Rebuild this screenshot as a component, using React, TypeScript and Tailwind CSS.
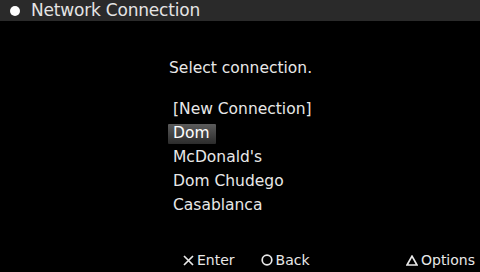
const items = ['Dom', "McDonald's", 'Dom Chudego', 'Casablanca'];

export default function App() {
    return (
        <div
            className="w-[480px] h-[272px] bg-black text-[#e8e8e8] flex flex-col overflow-hidden"
            style={{ fontFamily: '"DejaVu Sans", Verdana, sans-serif' }}
        >
            {/* Title bar */}
            <div className="h-[21px] bg-[#2a2a2a] flex items-center pl-[10px] gap-[11px]">
                <div className="w-[10px] h-[10px] rounded-full bg-white" />
                <span className="text-[17px] leading-none text-[#e4e4e4] tracking-[-0.2px]">Network Connection</span>
            </div>

            {/* Body */}
            <div className="flex-1 flex flex-col pl-[169px] pt-[37px]">
                <div className="text-[15.5px] leading-[20px]">Select connection.</div>
                <div className="mt-[20px] pl-[4px] flex flex-col">
                    <div className="h-[24px] flex items-center text-[15.5px]">[New Connection]</div>
                    {items.map((name, i) => (
                        <div key={name} className="h-[24px] flex items-center text-[15.5px]">
                            {i === 0 ? (
                                <span className="-ml-[5px] pl-[5px] pr-[6px] h-[20px] flex items-center bg-gradient-to-b from-[#5c5c5c] to-[#2c2c2c] rounded-[1px] text-white">
                                    {name}
                                </span>
                            ) : (
                                name
                            )}
                        </div>
                    ))}
                </div>
            </div>

            {/* Footer */}
            <div className="h-[22px] flex items-center text-[14px] mb-[1px]">
                <div className="ml-[183px] flex items-center gap-[3px]">
                    <svg width="11" height="11" viewBox="0 0 11 11" className="stroke-[#e8e8e8]" fill="none" strokeWidth="1.7">
                        <path d="M1 1 L10 10 M10 1 L1 10" />
                    </svg>
                    <span>Enter</span>
                </div>
                <div className="ml-[26px] flex items-center gap-[3px]">
                    <svg width="12" height="12" viewBox="0 0 12 12" className="stroke-[#e8e8e8]" fill="none" strokeWidth="1.7">
                        <circle cx="6" cy="6" r="4.8" />
                    </svg>
                    <span>Back</span>
                </div>
                <div className="ml-auto mr-[5px] flex items-center gap-[3px]">
                    <svg width="12" height="11" viewBox="0 0 12 11" className="stroke-[#e8e8e8]" fill="none" strokeWidth="1.7">
                        <path d="M6 1.2 L11 10 L1 10 Z" strokeLinejoin="miter" />
                    </svg>
                    <span>Options</span>
                </div>
            </div>
        </div>
    );
}
